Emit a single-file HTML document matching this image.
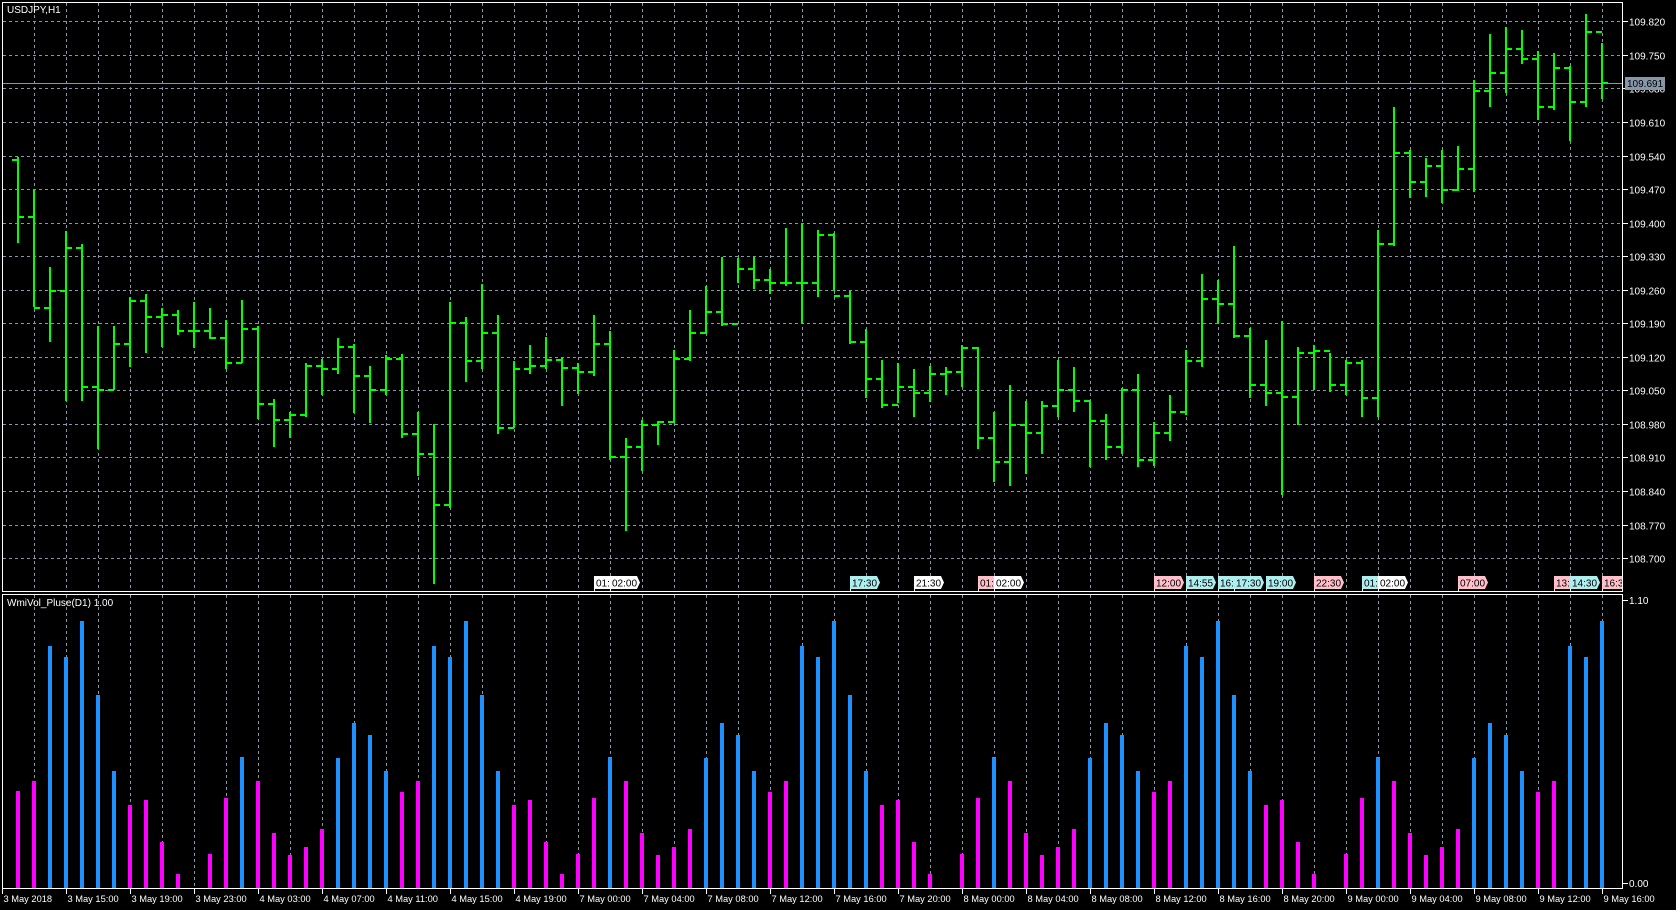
<!DOCTYPE html>
<html><head><meta charset="utf-8"><style>
html,body{margin:0;padding:0;background:#000;width:1676px;height:910px;overflow:hidden}
svg{display:block}
text{font-family:"Liberation Sans",sans-serif;font-size:10px}
.tl{font-size:9.3px}
</style></head><body>
<svg id="s" width="1676" height="910" xmlns="http://www.w3.org/2000/svg"></svg>
<script>
const S=1.0689;
const bars=[[147,227,150,203],[178,287,203,288],[250,320,288,272],[216,375,272,232],[228,375,232,362],[305,420,362,365],[305,365,365,322],[278,343,322,282],[275,330,282,297],[288,325,297,295],[290,313,295,310],[283,326,310,310],[288,317,310,316],[299,345,316,340],[281,340,340,308],[305,392,308,378],[373,418,378,393],[385,410,393,388],[340,390,388,342],[336,370,342,345],[316,350,345,325],[322,386,325,352],[342,396,352,365],[332,370,365,336],[331,410,336,406],[385,445,406,425],[397,546,425,472],[283,475,472,302],[297,357,302,338],[266,345,338,312],[295,406,312,400],[338,400,400,345],[323,350,345,342],[315,345,342,337],[335,380,337,344],[340,369,344,348],[295,352,348,322],[310,430,322,428],[410,497,428,418],[393,441,418,398],[394,416,398,395],[327,396,395,336],[290,338,336,312],[268,312,312,292],[240,305,292,303],[241,265,303,252],[240,270,252,262],[252,275,262,265],[213,268,265,265],[209,303,265,265],[215,278,265,220],[218,272,220,277],[272,322,277,320],[308,372,320,355],[337,382,355,379],[340,377,379,362],[345,390,362,368],[342,376,368,350],[343,370,350,348],[323,362,348,326],[325,420,326,410],[385,451,410,432],[360,455,432,398],[375,443,398,405],[375,425,405,380],[337,390,380,365],[343,385,365,375],[375,437,375,394],[387,430,394,418],[363,425,418,365],[350,437,365,430],[395,436,430,405],[370,413,405,385],[327,388,385,338],[256,343,338,280],[262,303,280,284],[230,316,284,314],[307,372,314,360],[318,380,360,368],[300,463,368,371],[325,398,371,330],[323,365,330,328],[330,367,328,360],[337,370,360,340],[337,390,340,372],[215,390,372,228],[100,230,228,143],[140,185,143,170],[148,184,170,155],[140,190,155,178],[137,179,178,158],[75,180,158,85],[32,100,85,68],[25,87,68,46],[28,60,46,55],[48,112,55,100],[50,103,100,64],[62,132,64,95],[13,100,95,30],[40,93,30,78]];
const hist=[['m',740],['m',731],['b',604],['b',615],['b',581],['b',650],['b',721],['m',753],['m',748],['m',788],['m',818],['n',0],['m',799],['m',747],['b',708],['m',731],['m',779],['m',800],['m',792],['m',776],['b',709],['b',676],['b',688],['b',721],['m',741],['m',731],['b',604],['b',615],['b',581],['b',650],['b',721],['m',753],['m',748],['m',788],['m',818],['m',799],['m',747],['b',708],['m',731],['m',779],['m',800],['m',792],['m',776],['b',709],['b',676],['b',688],['b',721],['m',741],['m',731],['b',604],['b',615],['b',581],['b',650],['b',721],['m',753],['m',748],['m',788],['m',818],['n',0],['m',799],['m',747],['b',708],['m',731],['m',779],['m',800],['m',792],['m',776],['b',709],['b',676],['b',688],['b',721],['m',741],['m',731],['b',604],['b',615],['b',581],['b',650],['b',721],['m',753],['m',748],['m',788],['m',818],['n',0],['m',799],['m',747],['b',708],['m',731],['m',779],['m',800],['m',792],['m',776],['b',709],['b',676],['b',688],['b',721],['m',741],['m',731],['b',604],['b',615],['b',581]];
let h='';
const G='#8797aa';
for(let x=34.5;x<1622;x+=32){h+=`<line x1="${x}" y1="3" x2="${x}" y2="591" stroke="${G}" stroke-dasharray="3,3"/>`;h+=`<line x1="${x}" y1="595" x2="${x}" y2="888" stroke="${G}" stroke-dasharray="3,3"/>`;}
const prices=['109.820','109.750','109.680','109.610','109.540','109.470','109.400','109.330','109.260','109.190','109.120','109.050','108.980','108.910','108.840','108.770','108.700'];
prices.forEach((p,k)=>{const y=Math.round(21.3+k*33.55)+0.5;h+=`<line x1="3" y1="${y}" x2="1622" y2="${y}" stroke="${G}" stroke-dasharray="3,3"/>`;h+=`<line x1="1623" y1="${y}" x2="1628" y2="${y}" stroke="#fff"/>`;h+=`<text x="1629" y="${y+4}" fill="#fff">${p}</text>`;});
h+=`<line x1="3" y1="83.5" x2="1622" y2="83.5" stroke="#8797aa"/>`;
h+=`<rect x="1625" y="77" width="40" height="13" fill="#8797aa"/><text x="1627" y="87" fill="#000">109.691</text>`;
bars.forEach((b,i)=>{const x=18+16*i;const [H,L,O,C]=b.map(v=>Math.round(v*S));h+=`<rect x="${x-1}" y="${H}" width="2" height="${Math.max(L-H,2)}" fill="#00ff00"/><rect x="${x-6}" y="${O-1}" width="6" height="2" fill="#00ff00"/><rect x="${x}" y="${C-1}" width="6" height="2" fill="#00ff00"/>`;});
const ev=[[36,'01:','#fff'],[37,'02:00','#fff'],[52,'17:30','#afeeee'],[56,'21:30','#fff'],[60,'01:','#ffc0cb'],[61,'02:00','#fff'],[71,'12:00','#ffc0cb'],[73,'14:55','#afeeee'],[75,'16:','#afeeee'],[76,'17:30','#afeeee'],[78,'19:00','#afeeee'],[81,'22:30','#ffc0cb'],[84,'01:','#afeeee'],[85,'02:00','#fff'],[90,'07:00','#ffc0cb'],[96,'13:','#ffc0cb'],[97,'14:30','#afeeee'],[99,'16:30','#ffc0cb']];
ev.forEach(([i,t,c])=>{const x=18+16*i;h+=`<g clip-path="url(#cm)"><line x1="${x+0.5}" y1="576" x2="${x+0.5}" y2="591" stroke="#fff"/><path d="M${x} 576 H${x+27} L${x+30} 582.5 L${x+27} 589 H${x} Z" fill="${c}"/><text x="${x+2}" y="586.5" fill="#000">${t}</text></g>`;});
hist.forEach(([c,t],i)=>{if(c==='n')return;const x=18+16*i;const y=Math.round(t*S);h+=`<rect x="${x-2}" y="${y}" width="4" height="${888-y}" fill="${c==='b'?'#1e90ff':'#ff00ff'}"/>`;});
h+=`<defs><clipPath id="cm"><rect x="3" y="3" width="1619" height="588"/></clipPath></defs>`;
h+=`<rect x="2.5" y="2.5" width="1620" height="589" fill="none" stroke="#fff"/>`;
h+=`<rect x="2.5" y="594.5" width="1620" height="294" fill="none" stroke="#fff"/>`;
h+=`<text x="7" y="13" fill="#fff">USDJPY,H1</text>`;
h+=`<text x="7" y="606" fill="#fff">WmiVol_Pluse(D1) 1.00</text>`;
h+=`<line x1="1623" y1="600.5" x2="1628" y2="600.5" stroke="#fff"/><text x="1629" y="604" fill="#fff">1.10</text>`;
h+=`<line x1="1623" y1="883.5" x2="1628" y2="883.5" stroke="#fff"/><text x="1629" y="887" fill="#fff">0.00</text>`;
const tl=['3 May 2018','3 May 15:00','3 May 19:00','3 May 23:00','4 May 03:00','4 May 07:00','4 May 11:00','4 May 15:00','4 May 19:00','7 May 00:00','7 May 04:00','7 May 08:00','7 May 12:00','7 May 16:00','7 May 20:00','8 May 00:00','8 May 04:00','8 May 08:00','8 May 12:00','8 May 16:00','8 May 20:00','9 May 00:00','9 May 04:00','9 May 08:00','9 May 12:00','9 May 16:00'];
tl.forEach((t,k)=>{const x=2.5+64*k;h+=`<line x1="${x}" y1="889" x2="${x}" y2="894" stroke="#fff"/><text class="tl" x="${x+1}" y="902" fill="#fff">${t}</text>`;});
document.getElementById('s').innerHTML=h;
</script>
</body></html>
